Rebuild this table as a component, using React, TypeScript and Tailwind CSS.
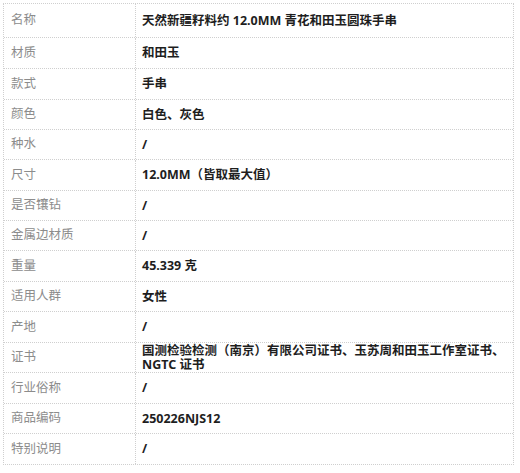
import React from "react";

const rows: { label: string; value: React.ReactNode; h: string }[] = [
  { label: "名称", value: "天然新疆籽料约 12.0MM 青花和田玉圆珠手串", h: "h-[34px]" },
  { label: "材质", value: "和田玉", h: "h-[31px]" },
  { label: "款式", value: "手串", h: "h-[31px]" },
  { label: "颜色", value: "白色、灰色", h: "h-[30px]" },
  { label: "种水", value: "/", h: "h-[30px]" },
  { label: "尺寸", value: "12.0MM（皆取最大值）", h: "h-[31px]" },
  { label: "是否镶钻", value: "/", h: "h-[30px]" },
  { label: "金属边材质", value: "/", h: "h-[30px]" },
  { label: "重量", value: "45.339 克", h: "h-[31px]" },
  { label: "适用人群", value: "女性", h: "h-[30px]" },
  { label: "产地", value: "/", h: "h-[31px]" },
  {
    label: "证书",
    value: (
      <span className="block leading-[14px] whitespace-nowrap">
        国测检验检测（南京）有限公司证书、玉苏周和田玉工作室证书、
        <br />
        NGTC 证书
      </span>
    ),
    h: "h-[30px]",
  },
  { label: "行业俗称", value: "/", h: "h-[31px]" },
  { label: "商品编码", value: "250226NJS12", h: "h-[30px]" },
  { label: "特别说明", value: "/", h: "h-[30px]" },
];

export default function App() {
  return (
    <div
      className="w-[520px] h-[473px] bg-white pt-[3px] pl-[3px]"
      style={{ fontFamily: '"Noto Sans", "Noto Sans CJK SC", sans-serif' }}
    >
      <div className="w-[511px] border border-dotted border-[#cfcfcf]">
        {rows.map((r, i) => (
          <div
            key={i}
            className={`flex ${r.h} ${i < rows.length - 1 ? "border-b border-dotted border-[#cfcfcf]" : ""}`}
          >
            <div className="w-[132px] shrink-0 border-r border-dotted border-[#cfcfcf] flex items-center pl-[7px] text-[12.5px] text-[#8c8c8c]">
              {r.label}
            </div>
            <div className="flex-1 flex items-center pl-[6px] pr-[4px] text-[12.5px] font-bold text-[#1e1e1e] leading-[16px] overflow-hidden">
              {r.value}
            </div>
          </div>
        ))}
      </div>
    </div>
  );
}
